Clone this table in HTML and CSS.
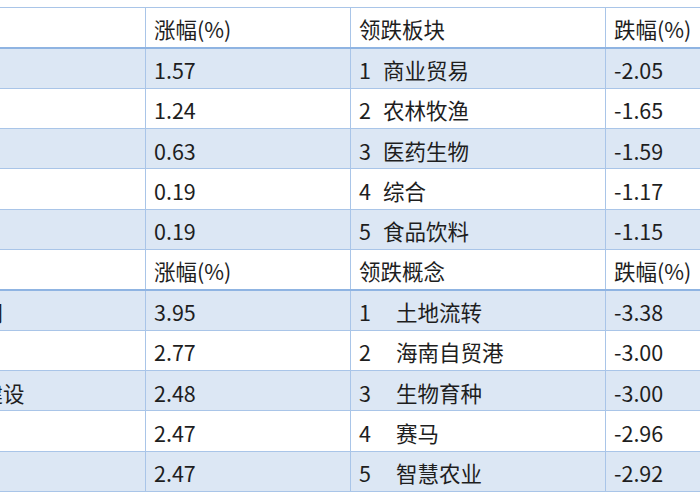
FILE: index.html
```html
<!DOCTYPE html>
<html lang="zh-CN">
<head>
<meta charset="utf-8">
<title>板块涨跌</title>
<link rel="stylesheet" href="styles.css">
</head>
<body>
<div class="sheet">
<table class="grid">
  <colgroup>
    <col class="c1"><col class="c2"><col class="c3"><col class="c4">
  </colgroup>
  <tbody>
    <tr class="head"><td></td><td>涨幅(%)</td><td>领跌板块</td><td>跌幅(%)</td></tr>
    <tr class="band"><td></td><td>1.57</td><td><span class="no">1</span>商业贸易</td><td>-2.05</td></tr>
    <tr><td></td><td>1.24</td><td><span class="no">2</span>农林牧渔</td><td>-1.65</td></tr>
    <tr class="band"><td></td><td>0.63</td><td><span class="no">3</span>医药生物</td><td>-1.59</td></tr>
    <tr><td></td><td>0.19</td><td><span class="no">4</span>综合</td><td>-1.17</td></tr>
    <tr class="band"><td></td><td>0.19</td><td><span class="no">5</span>食品饮料</td><td>-1.15</td></tr>
    <tr class="head"><td></td><td>涨幅(%)</td><td>领跌概念</td><td>跌幅(%)</td></tr>
    <tr class="band"><td>智能电网</td><td>3.95</td><td><span class="no wide">1</span>土地流转</td><td>-3.38</td></tr>
    <tr><td></td><td>2.77</td><td><span class="no wide">2</span>海南自贸港</td><td>-3.00</td></tr>
    <tr class="band"><td>新农村建设</td><td>2.48</td><td><span class="no wide">3</span>生物育种</td><td>-3.00</td></tr>
    <tr><td></td><td>2.47</td><td><span class="no wide">4</span>赛马</td><td>-2.96</td></tr>
    <tr class="band"><td></td><td>2.47</td><td><span class="no wide">5</span>智慧农业</td><td>-2.92</td></tr>
  </tbody>
</table>
</div>
</body>
</html>
```
FILE: styles.css
```css
html, body {
  margin: 0;
  padding: 0;
  background: #ffffff;
  overflow: hidden;
}

.sheet {
  width: 700px;
  height: 500px;
  overflow: hidden;
  padding-top: 7px;
  box-sizing: border-box;
}

.grid {
  margin-left: -100px;
  border-collapse: collapse;
  table-layout: fixed;
  width: 855px;
  font-family: "Noto Sans CJK SC", "Noto Sans", sans-serif;
  font-size: 21.5px;
  color: #1e1e1e;
}

.c1 { width: 245px; }
.c2 { width: 205px; }
.c3 { width: 255px; }
.c4 { width: 150px; }

.grid td {
  height: 40.33px;
  padding: 4px 0 0 8px;
  box-sizing: border-box;
  line-height: 30px;
  white-space: nowrap;
  overflow: hidden;
  border: 1px solid #a9c5e8;
  vertical-align: middle;
}

.grid td:first-child {
  padding-left: 16px;
  overflow: visible;
}

.grid tr.head td {
  border-bottom: 2px solid #8fb4e2;
}

.grid tr.band td {
  background: #dce7f4;
}

.no {
  display: inline-block;
  width: 24px;
}

.no.wide {
  width: 37px;
}
```
